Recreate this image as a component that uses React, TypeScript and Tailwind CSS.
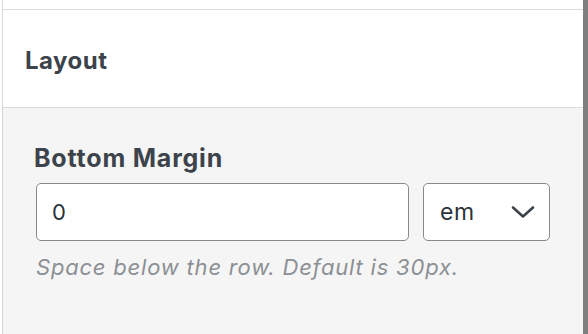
const App = () => {
  return (
    <div
      className="flex h-[334px] w-[588px] overflow-hidden bg-white"
      style={{ fontFamily: "Inter, 'Liberation Sans', sans-serif" }}
    >
      {/* Panel */}
      <div className="ml-[2px] flex flex-1 flex-col border-l border-[#d6d6d8]">
        <div className="h-[10px] border-b border-[#dcdcde]" />

        {/* Section header */}
        <div className="h-[98px] border-b border-[#dcdcde] pl-[22px] pt-[36px]">
          <h2 className="text-[24px] leading-[30px] font-bold tracking-[0.5px] text-[#3c434a]">
            Layout
          </h2>
        </div>

        {/* Section body */}
        <div className="flex-1 bg-[#f5f5f5] px-[33px] pt-[35px]">
          <label className="-ml-[2px] block text-[25px] leading-[30px] font-bold tracking-[0.8px] text-[#3c434a]">
            Bottom Margin
          </label>
          <div className="mt-[10px] flex gap-[14px]">
            <input
              type="text"
              defaultValue="0"
              className="h-[58px] min-w-0 flex-1 rounded-[5px] border border-[#85888d] bg-white px-[15px] text-[22px] tracking-[0.5px] text-[#2c3338] outline-none"
            />
            <div className="flex h-[58px] w-[127px] items-center justify-between rounded-[5px] border border-[#85888d] bg-white pl-[16px] pr-[14px] text-[23px] tracking-[0.5px] text-[#2c3338]">
              <span>em</span>
              <svg
                width="24"
                height="14"
                viewBox="0 0 24 14"
                fill="none"
                stroke="#3c434a"
                strokeWidth={2.6}
                strokeLinecap="round"
                strokeLinejoin="round"
              >
                <path d="M2 2.5 L12 11.5 L22 2.5" />
              </svg>
            </div>
          </div>
          <p className="mt-[13px] text-[22px] leading-[26px] italic tracking-[0.8px] text-[#8c8f94]">
            Space below the row. Default is 30px.
          </p>
        </div>
      </div>

      {/* Scrollbar */}
      <div className="w-[6px] bg-[#7f7f7f]" />
    </div>
  );
};

export default App;
